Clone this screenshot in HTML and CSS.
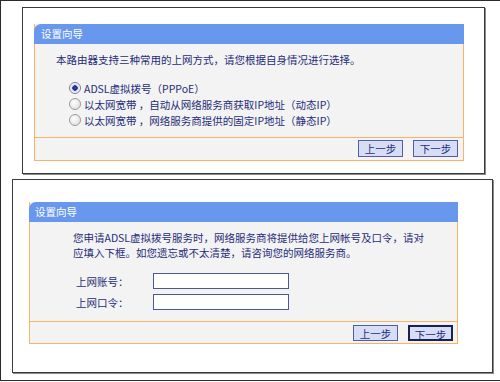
FILE: index.html
```html
<!DOCTYPE html>
<html lang="zh-CN">
<head>
    <meta charset="UTF-8">
    <title>设置向导</title>
    <link rel="stylesheet" href="styles.css">
</head>
<body>
    <div class="page">
        <div class="frame frame-one">
            <div class="panel">
                <div class="panel-head">设置向导</div>
                <div class="panel-body body-one">
                    <p class="intro">本路由器支持三种常用的上网方式，请您根据自身情况进行选择。</p>
                    <label class="choice"><input type="radio" name="mode" checked>ADSL虚拟拨号（PPPoE）</label>
                    <label class="choice"><input type="radio" name="mode">以太网宽带 ，自动从网络服务商获取IP地址（动态IP）</label>
                    <label class="choice"><input type="radio" name="mode">以太网宽带 ，网络服务商提供的固定IP地址（静态IP）</label>
                </div>
                <div class="panel-foot">
                    <button class="btn">上一步</button>
                    <button class="btn">下一步</button>
                </div>
            </div>
        </div>

        <div class="frame frame-two">
            <div class="panel">
                <div class="panel-head">设置向导</div>
                <div class="panel-body body-two">
                    <p class="intro">您申请ADSL虚拟拨号服务时，网络服务商将提供给您上网帐号及口令，请对<br>应填入下框。如您遗忘或不太清楚，请咨询您的网络服务商。</p>
                    <div class="field">
                        <span class="field-label">上网账号：</span>
                        <input type="text" class="field-input">
                    </div>
                    <div class="field">
                        <span class="field-label">上网口令：</span>
                        <input type="password" class="field-input">
                    </div>
                </div>
                <div class="panel-foot">
                    <button class="btn">上一步</button>
                    <button class="btn btn-focus">下一步</button>
                </div>
            </div>
        </div>
    </div>
</body>
</html>
```

FILE: styles.css
```css
* {
    box-sizing: border-box;
}

body {
    margin: 0;
    background: #fff;
    font-family: 'Noto Sans CJK SC', 'DejaVu Sans', sans-serif;
    font-size: 10.5px;
    color: #1f2c78;
}

p {
    margin: 0;
}

.page {
    width: 500px;
    height: 381px;
    border: 1px solid #2b2b2b;
    border-right: none;
}

.frame {
    border: 1px solid #3a3a3a;
    box-shadow: 1px 1px 0 #8a8a8a;
}

.frame-one {
    width: 463px;
    height: 167px;
    margin: 6px 0 0 21px;
    padding: 16px 0 0 11px;
}

.frame-two {
    width: 481px;
    height: 194px;
    margin: 5px 0 0 11px;
    padding: 22px 0 0 16px;
}

.frame-one .panel {
    width: 430px;
}

.frame-two .panel {
    width: 429px;
}

.panel {
    background: #f3f3f3;
    border: 1px solid #f8b366;
    border-top: none;
}

.panel-head {
    height: 20px;
    margin: 0 -1px;
    padding-left: 7px;
    line-height: 20px;
    background: #6897ee;
    color: #fff;
    border-top-left-radius: 7px;
}

.frame-two .panel-head {
    padding-left: 6px;
}

.panel-body {
    border-bottom: 1px solid #f8b366;
}

.body-one {
    height: 94px;
    padding: 8px 0 0 21px;
}

.body-one .intro {
    line-height: 16px;
    margin-bottom: 12px;
}

.choice {
    display: flex;
    align-items: center;
    height: 16px;
    padding-left: 13px;
}

.choice input {
    appearance: none;
    width: 12px;
    height: 12px;
    margin: 0 3px 0 0;
    border: 1px solid #9a9a9a;
    border-radius: 50%;
    background: radial-gradient(circle at 40% 35%, #fff, #d8d8d8);
}

.choice input:checked {
    background: radial-gradient(circle, #2c3b8f 0 2.5px, #cfd6ee 3px, #fff 5px);
    border-color: #7a7a9a;
}

.body-two {
    height: 100px;
    padding: 8px 0 0 43px;
}

.body-two .intro {
    line-height: 15px;
    margin-bottom: 13px;
}

.field {
    display: flex;
    align-items: center;
    height: 16px;
    margin-bottom: 5px;
    padding-left: 3px;
}

.field-label {
    width: 77px;
}

.field-input {
    width: 136px;
    height: 16px;
    margin: 0;
    border: 1px solid #4a5898;
    background: #fff;
}

.panel-foot {
    display: flex;
    justify-content: flex-end;
    gap: 10px;
    height: 22px;
    padding: 2px 5px 0 0;
}

.frame-two .panel-foot {
    height: 21px;
    padding: 3px 4px 0 0;
}

.btn {
    width: 45px;
    height: 17px;
    padding: 0;
    font-family: inherit;
    font-size: 10.5px;
    line-height: 15px;
    color: #1f2c78;
    background: #d8ddf6;
    border: 1px solid #4f5ea6;
}

.frame-two .btn {
    height: 16px;
}

.btn-focus {
    border: 2px solid #1a2050;
}
```
